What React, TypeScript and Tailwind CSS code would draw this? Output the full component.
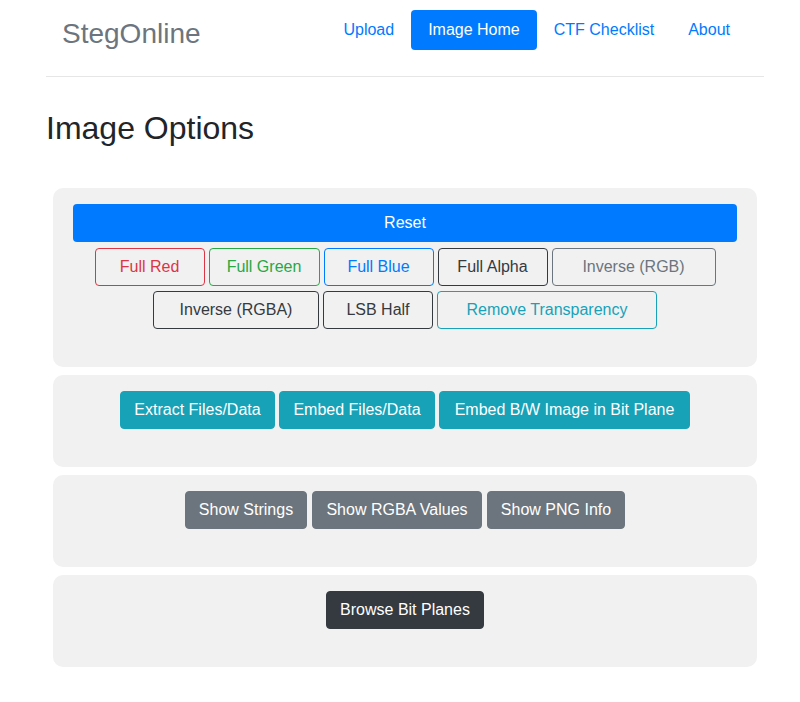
import React from "react";

const font = { fontFamily: '"Liberation Sans", Arial, sans-serif' };

function Btn({ w, cls, children }: { w: string; cls: string; children: React.ReactNode }) {
  return (
    <button
      className={`${w} ${cls} h-[38px] rounded-[4px] border text-[16px] leading-[24px] flex items-center justify-center whitespace-nowrap`}
    >
      {children}
    </button>
  );
}

function Panel({ children }: { children: React.ReactNode }) {
  return <div className="bg-[#f1f1f1] rounded-[10px] pt-4 pb-[38px] px-5">{children}</div>;
}

export default function App() {
  return (
    <div className="bg-white min-h-[702px] w-[800px]" style={font}>
      <div className="ml-[46px] w-[718px]">
        <div className="flex items-start justify-between pl-[16px] pr-[17px]">
          <div className="mt-[18px] text-[28px] leading-[normal] text-[#6c757d]">StegOnline</div>
          <nav className="mt-[10px] flex text-[16px] leading-[24px]">
            <a className="px-[17px] py-2 text-[#007bff] rounded-[4px]">Upload</a>
            <a className="px-[17px] py-2 text-white bg-[#007bff] rounded-[4px]">Image Home</a>
            <a className="px-[17px] py-2 text-[#007bff] rounded-[4px]">CTF Checklist</a>
            <a className="px-[17px] py-2 text-[#007bff] rounded-[4px]">About</a>
          </nav>
        </div>
        <div className="mt-[26px] h-px bg-[#e6e6e6]" />
        <h2 className="mt-[32px] text-[32px] leading-[38.4px] text-[#212529]">Image Options</h2>
        <div className="mt-[41px] mx-[7px] flex flex-col gap-2">
          <Panel>
            <button className="w-full h-[38px] rounded-[4px] bg-[#007bff] text-white text-[16px] leading-[24px]">
              Reset
            </button>
            <div className="mt-[6px] flex justify-center gap-[4px]">
              <Btn w="w-[110px]" cls="border-[#dc3545] text-[#dc3545]">Full Red</Btn>
              <Btn w="w-[111px]" cls="border-[#28a745] text-[#28a745]">Full Green</Btn>
              <Btn w="w-[110px]" cls="border-[#007bff] text-[#007bff]">Full Blue</Btn>
              <Btn w="w-[110px]" cls="border-[#343a40] text-[#343a40]">Full Alpha</Btn>
              <Btn w="w-[164px]" cls="border-[#6c757d] text-[#6c757d]">Inverse (RGB)</Btn>
            </div>
            <div className="mt-[5px] flex justify-center gap-[4px]">
              <Btn w="w-[166px]" cls="border-[#343a40] text-[#343a40]">Inverse (RGBA)</Btn>
              <Btn w="w-[110px]" cls="border-[#343a40] text-[#343a40]">LSB Half</Btn>
              <Btn w="w-[220px]" cls="border-[#17a2b8] text-[#17a2b8]">Remove Transparency</Btn>
            </div>
          </Panel>
          <Panel>
            <div className="flex justify-center gap-[4px]">
              <Btn w="w-[155px]" cls="border-[#17a2b8] bg-[#17a2b8] text-white">Extract Files/Data</Btn>
              <Btn w="w-[156px]" cls="border-[#17a2b8] bg-[#17a2b8] text-white">Embed Files/Data</Btn>
              <Btn w="w-[251px]" cls="border-[#17a2b8] bg-[#17a2b8] text-white">Embed B/W Image in Bit Plane</Btn>
            </div>
          </Panel>
          <Panel>
            <div className="flex justify-center gap-[5px]">
              <Btn w="w-[122px]" cls="border-[#6c757d] bg-[#6c757d] text-white">Show Strings</Btn>
              <Btn w="w-[170px]" cls="border-[#6c757d] bg-[#6c757d] text-white">Show RGBA Values</Btn>
              <Btn w="w-[138px]" cls="border-[#6c757d] bg-[#6c757d] text-white">Show PNG Info</Btn>
            </div>
          </Panel>
          <Panel>
            <div className="flex justify-center">
              <Btn w="w-[158px]" cls="border-[#343a40] bg-[#343a40] text-white">Browse Bit Planes</Btn>
            </div>
          </Panel>
        </div>
      </div>
    </div>
  );
}
